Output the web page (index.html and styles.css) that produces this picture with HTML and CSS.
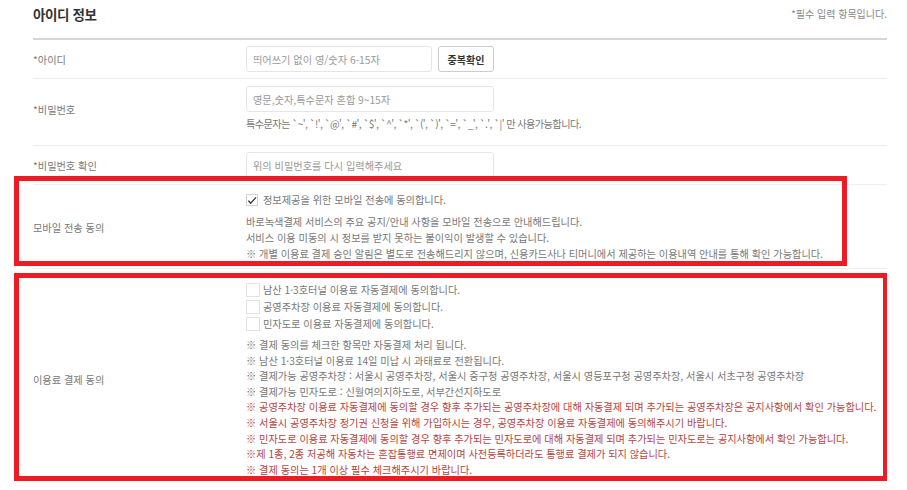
FILE: index.html
```html
<!DOCTYPE html>
<html lang="ko">
<head>
    <meta charset="UTF-8">
    <title>아이디 정보</title>
    <link rel="stylesheet" href="styles.css">
</head>
<body>
    <div class="page">
        <div class="section-head">
            <h2>아이디 정보</h2>
            <span class="req-note">*필수 입력 항목입니다.</span>
        </div>

        <div class="form-table">
            <div class="row row-id">
                <div class="th">*아이디</div>
                <div class="td inline">
                    <input type="text" class="field field-short" placeholder="띄어쓰기 없이 영/숫자 6-15자">
                    <button type="button" class="btn-check">중복확인</button>
                </div>
            </div>

            <div class="row row-pw">
                <div class="th">*비밀번호</div>
                <div class="td">
                    <input type="password" class="field" placeholder="영문,숫자,특수문자 혼합 9~15자">
                    <p class="hint">특수문자는 `~', `!', `@', `#', `$', `^', `*', `(', `)', `=', `_', `.', `|' 만 사용가능합니다.</p>
                </div>
            </div>

            <div class="row row-pw2">
                <div class="th">*비밀번호 확인</div>
                <div class="td">
                    <input type="password" class="field" placeholder="위의 비밀번호를 다시 입력해주세요">
                </div>
            </div>

            <div class="row row-mobile">
                <div class="th">모바일 전송 동의</div>
                <div class="td">
                    <label class="check checked">
                        <span class="box">
                            <svg viewBox="0 0 12 12" width="12" height="12"><path d="M1.6 6.2l2.8 3L10.8 2.2" fill="none" stroke="#333" stroke-width="1.6"/></svg>
                        </span>
                        정보제공을 위한 모바일 전송에 동의합니다.
                    </label>
                    <ul class="notes">
                        <li>바로녹색결제 서비스의 주요 공지/안내 사항을 모바일 전송으로 안내해드립니다.</li>
                        <li>서비스 이용 미동의 시 정보를 받지 못하는 불이익이 발생할 수 있습니다.</li>
                        <li>※ 개별 이용료 결제 승인 알림은 별도로 전송해드리지 않으며, 신용카드사나 티머니에서 제공하는 이용내역 안내를 통해 확인 가능합니다.</li>
                    </ul>
                </div>
            </div>

            <div class="row row-pay">
                <div class="th">이용료 결제 동의</div>
                <div class="td">
                    <div class="check-list">
                        <label class="check"><span class="box"></span>남산 1·3호터널 이용료 자동결제에 동의합니다.</label>
                        <label class="check"><span class="box"></span>공영주차장 이용료 자동결제에 동의합니다.</label>
                        <label class="check"><span class="box"></span>민자도로 이용료 자동결제에 동의합니다.</label>
                    </div>
                    <ul class="notes pay-notes">
                        <li>※ 결제 동의를 체크한 항목만 자동결제 처리 됩니다.</li>
                        <li>※ 남산 1·3호터널 이용료 14일 미납 시 과태료로 전환됩니다.</li>
                        <li>※ 결제가능 공영주차장 : 서울시 공영주차장, 서울시 중구청 공영주차장, 서울시 영등포구청 공영주차장, 서울시 서초구청 공영주차장</li>
                        <li>※ 결제가능 민자도로 : 신월여의지하도로, 서부간선지하도로</li>
                        <li class="warn">※ 공영주차장 이용료 자동결제에 동의할 경우 향후 추가되는 공영주차장에 대해 자동결제 되며 추가되는 공영주차장은 공지사항에서 확인 가능합니다.</li>
                        <li class="warn">※ 서울시 공영주차장 정기권 신청을 위해 가입하시는 경우, 공영주차장 이용료 자동결제에 동의해주시기 바랍니다.</li>
                        <li class="warn">※ 민자도로 이용료 자동결제에 동의할 경우 향후 추가되는 민자도로에 대해 자동결제 되며 추가되는 민자도로는 공지사항에서 확인 가능합니다.</li>
                        <li class="warn">※제 1종, 2종 저공해 자동차는 혼잡통행료 면제이며 사전등록하더라도 통행료 결제가 되지 않습니다.</li>
                        <li class="warn">※ 결제 동의는 1개 이상 필수 체크해주시기 바랍니다.</li>
                    </ul>
                </div>
            </div>
        </div>

        <!-- review markers -->
        <div class="mark mark-mobile"></div>
        <div class="mark mark-pay"></div>
    </div>
</body>
</html>
```

FILE: styles.css
```css
body {
    margin: 0;
    background: #fff;
    font-family: "Noto Sans CJK KR", "Noto Sans", sans-serif;
    color: #666;
}

.page {
    position: relative;
    width: 854px;
    height: 490px;
    padding-left: 33px;
    overflow: hidden;
}

.section-head {
    display: flex;
    justify-content: space-between;
    align-items: center;
    height: 27px;
    padding-bottom: 11px;
    border-bottom: 2px solid #d6d6d6;
}

.section-head h2 {
    margin: 0;
    font-size: 13.5px;
    font-weight: 700;
    letter-spacing: -0.4px;
    color: #333;
}

.req-note {
    font-size: 10px;
    color: #888;
}

.row {
    display: flex;
    border-bottom: 1px solid #eee;
    font-size: 10.2px;
}

.th {
    width: 213px;
    flex: none;
    display: flex;
    align-items: center;
    color: #777;
}

.td {
    flex: 1;
}

.td.inline {
    display: flex;
    align-items: center;
}

.row-id {
    padding: 6px 0;
}

.row-pw {
    padding: 7px 0 13px;
}

.row-pw2 {
    padding: 6px 0;
}

.row-mobile {
    padding: 7px 0 6px;
}

.row-pay {
    padding: 12px 0 10px;
    border-bottom: none;
}

.field {
    display: block;
    width: 248px;
    height: 26px;
    box-sizing: border-box;
    border: 1px solid #e6e6e6;
    border-radius: 3px;
    padding: 0 6px;
    font-family: inherit;
    font-size: 10.2px;
    color: #333;
    outline: none;
}

.field::placeholder {
    color: #999;
}

.field-short {
    width: 186px;
}

.btn-check {
    margin-left: 6px;
    width: 56px;
    height: 26px;
    border: 1px solid #ccc;
    border-radius: 3px;
    background: #fff;
    font-family: inherit;
    font-size: 10px;
    font-weight: 700;
    color: #333;
    padding: 0;
}

.hint {
    margin: 4px 0 0;
    line-height: 16px;
    color: #777;
    letter-spacing: -0.6px;
}

.check {
    display: flex;
    align-items: center;
    line-height: 16px;
    color: #777;
}

.check .box {
    width: 14px;
    height: 14px;
    box-sizing: border-box;
    border: 1px solid #e3e3e3;
    margin-right: 3px;
    flex: none;
}

.check.checked .box {
    width: 12px;
    height: 12px;
    margin-right: 5px;
    border-color: #d4d4d4;
    display: flex;
    align-items: center;
    justify-content: center;
}

.check.checked .box svg {
    width: 11px;
    height: 11px;
}

.check-list .check {
    line-height: 17px;
}

.notes {
    list-style: none;
    margin: 6px 0 0;
    padding: 0;
    line-height: 16px;
    color: #777;
}

.pay-notes {
    margin-top: 5px;
    line-height: 15.6px;
}

.notes .warn {
    color: #b5443f;
}

.mark {
    position: absolute;
    border: 5px solid #ed1c24;
    box-sizing: border-box;
}

.mark-mobile {
    left: 14px;
    top: 176px;
    width: 833px;
    height: 90px;
}

.mark-pay {
    left: 14px;
    top: 273px;
    width: 874px;
    height: 208px;
}
```
